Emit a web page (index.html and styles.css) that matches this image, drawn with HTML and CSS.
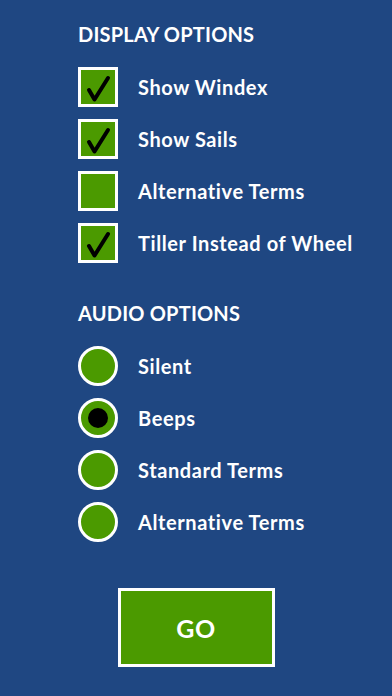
FILE: index.html
```html
<!DOCTYPE html>
<html>
<head>
<meta charset="utf-8">
<link rel="stylesheet" href="styles.css">
</head>
<body>
<div class="page">
  <section class="group">
    <h2 class="heading">DISPLAY OPTIONS</h2>
    <div class="options">
      <div class="row"><span class="box"><svg viewBox="0 0 34 34" class="check"><path d="M8 20 L13.5 29.5 L27 8" /></svg></span><span class="label">Show Windex</span></div>
      <div class="row"><span class="box"><svg viewBox="0 0 34 34" class="check"><path d="M8 20 L13.5 29.5 L27 8" /></svg></span><span class="label">Show Sails</span></div>
      <div class="row"><span class="box"></span><span class="label">Alternative Terms</span></div>
      <div class="row"><span class="box"><svg viewBox="0 0 34 34" class="check"><path d="M8 20 L13.5 29.5 L27 8" /></svg></span><span class="label">Tiller Instead of Wheel</span></div>
    </div>
  </section>
  <section class="group audio">
    <h2 class="heading">AUDIO OPTIONS</h2>
    <div class="options">
      <div class="row"><span class="radio"></span><span class="label">Silent</span></div>
      <div class="row"><span class="radio"><span class="dot"></span></span><span class="label">Beeps</span></div>
      <div class="row"><span class="radio"></span><span class="label">Standard Terms</span></div>
      <div class="row"><span class="radio"></span><span class="label">Alternative Terms</span></div>
    </div>
  </section>
  <div class="go-wrap"><button class="go">GO</button></div>
</div>
</body>
</html>
```
FILE: styles.css
```css
html, body {
  margin: 0;
  padding: 0;
  background: #1f4782;
}
body {
  width: 392px;
  height: 696px;
  overflow: hidden;
  font-family: "Lato", "Open Sans", sans-serif;
  color: #ffffff;
}
.page {
  display: flex;
  flex-direction: column;
  padding-top: 22px;
}
.group {
  display: flex;
  flex-direction: column;
  padding-left: 78px;
}
.audio {
  margin-top: 38px;
}
.heading {
  margin: 0;
  font-size: 20px;
  line-height: 24px;
  font-weight: 700;
  letter-spacing: 0.2px;
}
.options {
  display: flex;
  flex-direction: column;
  gap: 12px;
  margin-top: 21px;
}
.row {
  display: flex;
  align-items: center;
  gap: 20px;
  height: 40px;
}
.box {
  width: 34px;
  height: 34px;
  border: 3px solid #ffffff;
  background: #4b9a00;
  flex: none;
  display: flex;
}
.check {
  width: 34px;
  height: 34px;
}
.check path {
  fill: none;
  stroke: #000000;
  stroke-width: 4;
  stroke-linecap: round;
  stroke-linejoin: round;
}
.radio {
  width: 34px;
  height: 34px;
  border: 3px solid #ffffff;
  border-radius: 50%;
  background: #4b9a00;
  flex: none;
  display: flex;
  align-items: center;
  justify-content: center;
}
.dot {
  width: 20px;
  height: 20px;
  border-radius: 50%;
  background: #000000;
}
.label {
  font-size: 20px;
  font-weight: 700;
  line-height: 24px;
  letter-spacing: 0.6px;
}
.go-wrap {
  display: flex;
  justify-content: center;
  margin-top: 46px;
}
.go {
  width: 157px;
  height: 79px;
  border: 3px solid #ffffff;
  background: #4b9a00;
  color: #ffffff;
  font-family: "Lato", "Open Sans", sans-serif;
  font-weight: 700;
  font-size: 25px;
  padding: 0;
  margin: 0;
  letter-spacing: 0.5px;
}
```
